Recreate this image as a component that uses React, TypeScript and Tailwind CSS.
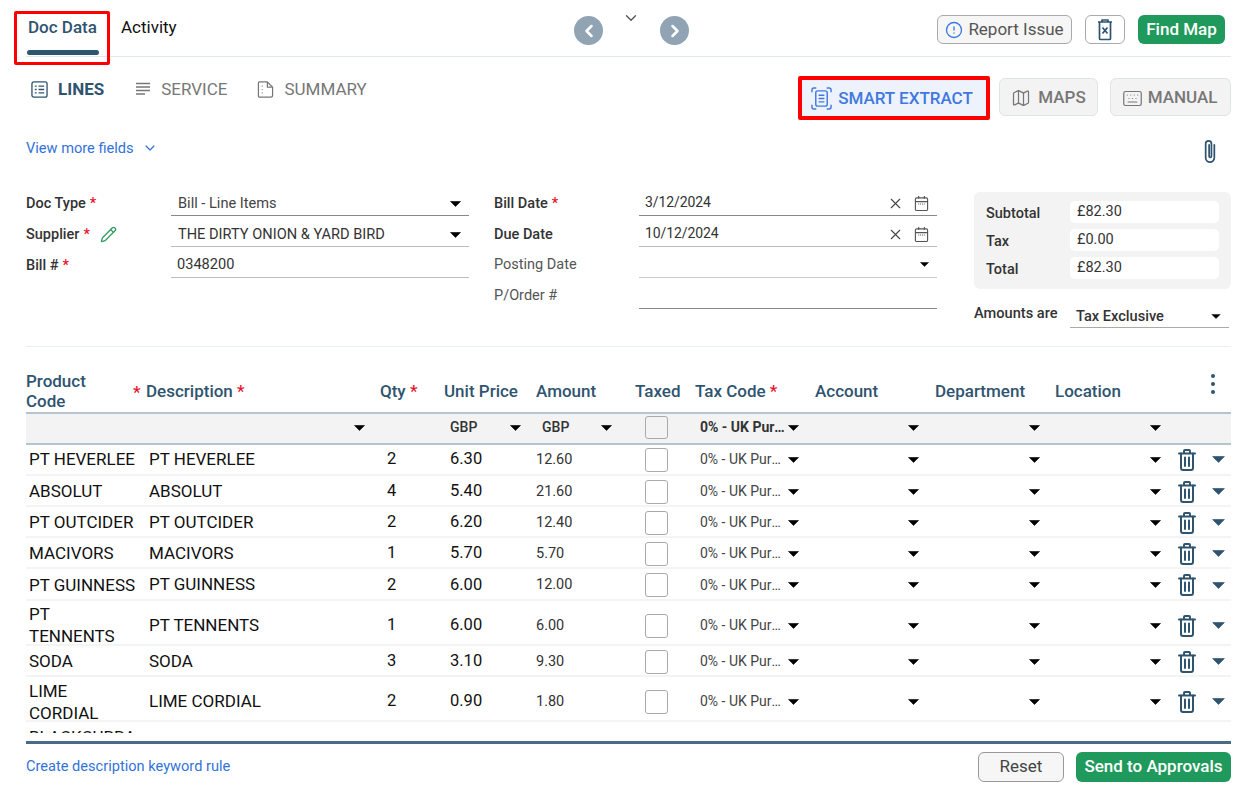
import React from "react";
import { Map, Keyboard, Pencil, X, ChevronDown, ChevronLeft, ChevronRight, CircleAlert } from "lucide-react";

const COLS = "grid grid-cols-[120px_234px_64px_92px_99px_60px_120px_120px_120px_120px_56px]";

const Caret = ({ className = "w-[11px] h-[6px] text-black" }: { className?: string }) => (
  <svg viewBox="0 0 11 6" className={className + " shrink-0"}>
    <path d="M0.5 0.5h10L5.5 5.5z" fill="currentColor" stroke="currentColor" strokeWidth="0.6" strokeLinejoin="round" />
  </svg>
);

const Star = ({ className = "" }: { className?: string }) => <span className={"text-[#e8112d] " + className}>*</span>;

const Trash = () => (
  <svg viewBox="0 0 18 22" className="w-[18px] h-[22px] text-[#2f5470]" fill="none" stroke="currentColor" strokeWidth="2" strokeLinecap="round" strokeLinejoin="round">
    <path d="M1 4.5h16M6 4.5V2a1 1 0 0 1 1-1h4a1 1 0 0 1 1 1v2.5" />
    <path d="M3 4.5V19a2 2 0 0 0 2 2h8a2 2 0 0 0 2-2V4.5" />
    <path d="M7 8.5v8.5M11 8.5v8.5" />
  </svg>
);

const Calendar = () => (
  <svg viewBox="0 0 16 18" className="w-[15px] h-[17px] text-[#555]" fill="none" stroke="currentColor" strokeWidth="1.2">
    <rect x="1.5" y="3" width="13" height="13.5" rx="1.5" />
    <path d="M1.5 7h13M5 1v3M11 1v3" />
    <path d="M4.5 9.5h7" strokeDasharray="1 1" />
  </svg>
);

const LinesIcon = () => (
  <svg viewBox="0 0 18 18" className="w-[17px] h-[17px]" fill="none" stroke="#2f5470" strokeWidth="1.4">
    <rect x="1" y="1" width="16" height="16" rx="2" />
    <path d="M4 5.5h2M8 5.5h6M4 9h2M8 9h6M4 12.5h2M8 12.5h6" />
  </svg>
);

const ServiceIcon = () => (
  <svg viewBox="0 0 16 16" className="w-[16px] h-[16px]" fill="none" stroke="#777" strokeWidth="1.3">
    <path d="M1 2.5h14M1 6h14M1 9.5h14M1 13h9" />
  </svg>
);

const SummaryIcon = () => (
  <svg viewBox="0 0 18 18" className="w-[17px] h-[17px]" fill="none" stroke="#777" strokeWidth="1.3" strokeLinejoin="round">
    <path d="M2.5 1h8.5l5.5 5.5V15a2 2 0 0 1-2 2h-12a1 1 0 0 1-1-1V2.5A1.5 1.5 0 0 1 2.5 1z" />
    <path d="M11 1v5.5h5.5M5 5.5h1M5 9h1M5 12.5h1" />
  </svg>
);

const ScanIcon = () => (
  <svg viewBox="0 0 22 24" className="w-[21px] h-[23px]" fill="none" stroke="#3f79e0" strokeWidth="1.5" strokeLinecap="round">
    <path d="M1 5V3a2 2 0 0 1 2-2h2M17 1h2a2 2 0 0 1 2 2v2M1 19v2a2 2 0 0 0 2 2h2M17 23h2a2 2 0 0 0 2-2v-2" />
    <rect x="5" y="4" width="12" height="16" rx="2" />
    <path d="M8.5 8.5h5M8.5 12h5M8.5 15.5h5" />
  </svg>
);

const ClipboardX = () => (
  <svg viewBox="0 0 16 22" className="w-[16px] h-[23px]" fill="none" stroke="#2f5470" strokeWidth="1.7" strokeLinejoin="round">
    <path d="M1 3.5h14M5 3.5V1.5h6v2" />
    <path d="M2.5 3.5V20a1 1 0 0 0 1 1h9a1 1 0 0 0 1-1V3.5" />
    <path d="M5.5 9l5 6M10.5 9l-5 6" />
  </svg>
);

const Clip = () => (
  <svg viewBox="0 0 16 26" className="w-[16px] h-[25px]" fill="none" stroke="#2f5470" strokeWidth="1.8" strokeLinecap="round">
    <path d="M12.5 6v13.5a4.5 4.5 0 0 1-9 0V5a3 3 0 0 1 6 0v13a1.2 1.2 0 0 1-2.4 0V6" />
  </svg>
);

type Row = { code: string[]; desc: string; qty: string; unit: string; amount: string; h: string; codeClass: string };

const rows: Row[] = [
  { code: ["PT HEVERLEE"], desc: "PT HEVERLEE", qty: "2", unit: "6.30", amount: "12.60", h: "h-[31px]", codeClass: "-mt-[1px]" },
  { code: ["ABSOLUT"], desc: "ABSOLUT", qty: "4", unit: "5.40", amount: "21.60", h: "h-[31px] pt-[2px]", codeClass: "-mt-[1px]" },
  { code: ["PT OUTCIDER"], desc: "PT OUTCIDER", qty: "2", unit: "6.20", amount: "12.40", h: "h-[31px] pt-[2px]", codeClass: "-mt-[1px]" },
  { code: ["MACIVORS"], desc: "MACIVORS", qty: "1", unit: "5.70", amount: "5.70", h: "h-[31px] pt-[2px]", codeClass: "-mt-[1px]" },
  { code: ["PT GUINNESS"], desc: "PT GUINNESS", qty: "2", unit: "6.00", amount: "12.00", h: "h-[32px] pt-[2px]", codeClass: "-mt-[1px]" },
  { code: ["PT", "TENNENTS"], desc: "PT TENNENTS", qty: "1", unit: "6.00", amount: "6.00", h: "h-[45px] pt-[3px]", codeClass: "-mt-[1px]" },
  { code: ["SODA"], desc: "SODA", qty: "3", unit: "3.10", amount: "9.30", h: "h-[31px] pt-[2px]", codeClass: "-mt-[1px]" },
  { code: ["LIME", "CORDIAL"], desc: "LIME CORDIAL", qty: "2", unit: "0.90", amount: "1.80", h: "h-[45px] pt-[2px]", codeClass: "mt-[1px]" },
  { code: ["BLACKCURRA"], desc: "BLACKCURRANT", qty: "1", unit: "1.00", amount: "1.00", h: "h-[45px] pt-[2px]", codeClass: "self-start pt-[2px]" },
];

const Label = ({ children, bold = true }: { children: React.ReactNode; bold?: boolean }) => (
  <div className={"w-[145px] shrink-0 text-[14.5px] leading-[20px] flex items-center gap-1 " + (bold ? "font-medium text-[#333] pt-[6px]" : "text-[#555] pt-[4px]")}>
    {children}
  </div>
);

const Field = ({ children, line = "border-[#888]" }: { children?: React.ReactNode; line?: string }) => (
  <div className={"flex-1 h-[31px] border-b flex items-center pt-[8px] pl-[7px] pr-[8px] text-[14.6px] text-[#333] " + line}>{children}</div>
);

const FormRow = ({ children }: { children: React.ReactNode }) => <div className="flex items-center h-[31px]">{children}</div>;

export default function App() {
  return (
    <div className="w-[1256px] h-[786px] overflow-hidden bg-white pl-[26px] pr-[25px] font-['Roboto',sans-serif] text-black">
      {/* Header */}
      <div className="h-[57px] border-b border-[#e3e9e9] flex items-start">
        <div className="w-[548px] flex items-start">
          <div className="relative w-[73px] h-[56px] pl-[2px] pt-[17px] text-[17px] leading-[20px] font-medium text-[#2f5470] whitespace-nowrap">
            Doc Data
            <div className="absolute left-[1px] top-[50px] w-[72px] h-[5px] rounded-full bg-[#2f5470]" />
            <div className="absolute -left-[12px] top-[11px] w-[96px] h-[54px] border-[3.5px] border-[#f00] rounded-[2px]" />
          </div>
          <div className="ml-[22px] pt-[17px] text-[17px] leading-[20px] text-[#111]">Activity</div>
        </div>
        <div className="flex items-start pt-[16px]">
          <div className="w-[29px] h-[29px] rounded-full bg-[#90a4b4] flex items-center justify-center">
            <ChevronLeft className="w-[20px] h-[20px] text-white" strokeWidth={3} />
          </div>
          <div className="w-[55px] flex justify-center -mt-[7px] mr-[2px]">
            <ChevronDown className="w-[24px] h-[18px] text-[#555]" strokeWidth={1.8} />
          </div>
          <div className="w-[29px] h-[29px] rounded-full bg-[#90a4b4] flex items-center justify-center">
            <ChevronRight className="w-[20px] h-[20px] text-white" strokeWidth={3} />
          </div>
        </div>
        <div className="flex-1 flex justify-end items-center gap-[13px] pt-[15px] pr-[6px]">
          <button className="w-[135px] h-[29px] rounded-[6px] border border-[#aaa] bg-[#f6f6f6] flex items-center justify-center gap-[5px] text-[17px] text-[#555]">
            <CircleAlert className="w-[18px] h-[18px] text-[#3f79e0]" strokeWidth={1.8} />
            Report Issue
          </button>
          <button className="w-[40px] h-[29px] rounded-[6px] border border-[#aaa] bg-white flex items-center justify-center">
            <ClipboardX />
          </button>
          <button className="w-[87px] h-[29px] rounded-[6px] bg-[#1f9a5c] text-white text-[17px] font-medium">Find Map</button>
        </div>
      </div>

      {/* Sub tabs */}
      <div className="h-[73px] flex items-start">
        <div className="flex-1 flex items-center pt-[22px] text-[17px] leading-[20px]">
          <div className="ml-[5px]"><LinesIcon /></div>
          <span className="ml-[10px] font-bold text-[#2f5470]">LINES</span>
          <div className="ml-[31px]"><ServiceIcon /></div>
          <span className="ml-[10px] text-[#777]">SERVICE</span>
          <div className="ml-[30px]"><SummaryIcon /></div>
          <span className="ml-[10px] text-[#777]">SUMMARY</span>
        </div>
        <div className="flex items-start gap-[9px] pt-[19px]">
          <div className="border-[4px] border-[#f00] rounded-[2px]">
            <button className="w-[184px] h-[36px] bg-[#eef2fd] flex items-center justify-center gap-[6px] pr-[4px] pt-[1px] text-[17px] font-medium text-[#3f79e0]">
              <ScanIcon />
              SMART EXTRACT
            </button>
          </div>
          <button className="w-[99px] h-[38px] mt-[2px] rounded-[6px] border border-[#dfe4e4] bg-[#f3f3f3] flex items-center justify-center gap-[7px] pt-[2px] text-[17px] font-medium text-[#777]">
            <Map className="w-[20px] h-[20px]" strokeWidth={1.5} />
            MAPS
          </button>
          <button className="w-[121px] h-[38px] mt-[2px] ml-[3px] rounded-[6px] border border-[#dfe4e4] bg-[#f3f3f3] flex items-center justify-center gap-[5px] pt-[2px] pr-[2px] text-[17px] font-medium text-[#777]">
            <Keyboard className="w-[21px] h-[21px]" strokeWidth={1.4} />
            MANUAL
          </button>
        </div>
      </div>

      {/* View more */}
      <div className="h-[55px] flex items-start justify-between">
        <div className="flex items-center gap-[8px] pt-[8px] text-[14.6px] leading-[20px] text-[#3373d9]">
          View more fields
          <ChevronDown className="w-[16px] h-[16px]" strokeWidth={1.8} />
        </div>
        <div className="pt-[9px] pr-[13px]"><Clip /></div>
      </div>

      {/* Form */}
      <div className="h-[162px] border-b border-[#e9eeee] flex items-start">
        <div className="w-[443px]">
          <FormRow>
            <Label>Doc Type <Star /></Label>
            <Field>
              <span className="flex-1 text-[#444]">Bill - Line Items</span>
              <Caret />
            </Field>
          </FormRow>
          <FormRow>
            <Label>
              Supplier <Star />
              <Pencil className="ml-[6px] w-[17px] h-[17px] text-[#2f9e62]" strokeWidth={1.8} />
            </Label>
            <Field line="border-[#bbb]">
              <span className="flex-1">THE DIRTY ONION &amp; YARD BIRD</span>
              <Caret />
            </Field>
          </FormRow>
          <FormRow>
            <Label>Bill # <Star /></Label>
            <Field line="border-[#bbb]">
              <span className="flex-1 -ml-[1px] -mt-[2px]">0348200</span>
            </Field>
          </FormRow>
        </div>
        <div className="w-[443px] ml-[25px]">
          <FormRow>
            <Label>Bill Date <Star /></Label>
            <Field>
              <span className="flex-1 -ml-[1px] -mt-[4px] text-[14px] tracking-[-0.1px]">3/12/2024</span>
              <X className="w-[17px] h-[17px] text-[#444] mr-[10px] -mt-[2px]" strokeWidth={1.5} />
              <div className="-mt-[2px]"><Calendar /></div>
            </Field>
          </FormRow>
          <FormRow>
            <Label>Due Date</Label>
            <Field line="border-[#bbb]">
              <span className="flex-1 -ml-[1px] -mt-[4px] text-[14px] tracking-[-0.1px]">10/12/2024</span>
              <X className="w-[17px] h-[17px] text-[#444] mr-[10px] -mt-[2px]" strokeWidth={1.5} />
              <div className="-mt-[2px]"><Calendar /></div>
            </Field>
          </FormRow>
          <FormRow>
            <Label bold={false}>Posting Date</Label>
            <Field line="border-[#ccc]">
              <span className="flex-1" />
              <Caret className="w-[9px] h-[5px] text-black -mt-[4px]" />
            </Field>
          </FormRow>
          <FormRow>
            <Label bold={false}>P/Order #</Label>
            <Field line="border-[#888]" />
          </FormRow>
        </div>
        <div className="w-[257px] ml-[37px] pt-[7px]">
          <div className="h-[97px] rounded-[6px] bg-[#f3f3f3] pl-[12px] pr-[12px] pt-[9px] flex flex-col gap-[6px] text-[14.5px]">
            {[["Subtotal", "£82.30"], ["Tax", "£0.00"], ["Total", "£82.30"]].map(([k, v]) => (
              <div key={k} className="flex items-start h-[22px]">
                <span className="w-[84px] pt-[2px] font-medium text-[#333]">{k}</span>
                <span className="flex-1 h-[22px] rounded-[5px] bg-white pl-[7px] pt-[1px] leading-[20px] text-[#333]">{v}</span>
              </div>
            ))}
          </div>
          <div className="flex items-start mt-[14px]">
            <span className="w-[96px] text-[14.6px] leading-[20px] font-medium text-[#333]">Amounts are</span>
            <div className="w-[159px] h-[24px] border-b border-[#aaa] flex items-center pl-[6px] pr-[8px] mt-[1px] pt-[2px] text-[14.6px] font-medium text-[#333]">
              <span className="flex-1">Tax Exclusive</span>
              <Caret className="w-[10px] h-[5px] text-black" />
            </div>
          </div>
        </div>
      </div>

      {/* Table header */}
      <div className={COLS + " mt-[25px] h-[40px] items-center text-[17px] font-medium text-[#2f5470]"}>
        <div className="flex items-center leading-[20px]">
          <span className="w-[107px] -mt-[2px]">Product<br />Code</span>
          <Star />
        </div>
        <div>Description <Star /></div>
        <div>Qty <Star /></div>
        <div>Unit Price</div>
        <div>Amount</div>
        <div>Taxed</div>
        <div>Tax Code <Star /></div>
        <div>Account</div>
        <div>Department</div>
        <div>Location</div>
        <div className="flex justify-end pr-[16px] pb-[17px]">
          <div className="flex flex-col gap-[4px]">
            <span className="w-[4px] h-[4px] rounded-full bg-[#2f5470]" />
            <span className="w-[4px] h-[4px] rounded-full bg-[#2f5470]" />
            <span className="w-[4px] h-[4px] rounded-full bg-[#2f5470]" />
          </div>
        </div>
      </div>

      {/* Filter row */}
      <div className={COLS + " h-[33px] pb-[2px] items-center border-y-2 border-[#b5c5d0] bg-[#f3f3f3] text-[14px] font-medium text-[#333]"}>
        <div />
        <div className="flex justify-end pr-[15px]"><Caret /></div>
        <div />
        <div className="flex items-center justify-between pl-[6px] pr-[15px]">GBP<Caret /></div>
        <div className="flex items-center justify-between pl-[6px] pr-[23px]">GBP<Caret /></div>
        <div className="pl-[10px]"><div className="w-[23px] h-[23px] rounded-[3px] border border-[#aaa]" /></div>
        <div className="flex items-center gap-[2px] pl-[5px] pr-[16px]"><span className="truncate flex-1 font-bold">0% - UK Purchases</span><Caret /></div>
        <div className="flex justify-end pr-[16px]"><Caret /></div>
        <div className="flex justify-end pr-[15px]"><Caret /></div>
        <div className="flex justify-end pr-[14px]"><Caret /></div>
        <div />
      </div>

      {/* Rows */}
      <div className="h-[288px] overflow-hidden">
        {rows.map((r) => (
          <div key={r.desc} className={COLS + " items-center border-b-2 border-[#f3f4f4] " + r.h}>
            <div className={"pl-[3px] text-[17px] leading-[22px] text-[#111] " + r.codeClass}>
              {r.code.map((c) => <div key={c}>{c}</div>)}
            </div>
            <div className="pl-[3px] text-[17px] text-[#111]">{r.desc}</div>
            <div className="pl-[7px] text-[16.5px] text-[#111]">{r.qty}</div>
            <div className="pl-[6px] text-[16.5px] text-[#111]">{r.unit}</div>
            <div className="text-[14.5px] text-[#333]">{r.amount}</div>
            <div className="pl-[10px]"><div className="w-[23px] h-[24px] rounded-[3px] border border-[#aaa] bg-white" /></div>
            <div className="flex items-center gap-[2px] pl-[5px] pr-[16px] text-[14px] text-[#444]"><span className="truncate flex-1">0% - UK Purchases</span><Caret /></div>
            <div className="flex justify-end pr-[16px]"><Caret /></div>
            <div className="flex justify-end pr-[15px]"><Caret /></div>
            <div className="flex justify-end pr-[14px]"><Caret /></div>
            <div className="flex items-center justify-between pl-[3px] pr-[6px]">
              <Trash />
              <Caret className="w-[13px] h-[7px] text-[#2f5470]" />
            </div>
          </div>
        ))}
      </div>

      {/* Footer */}
      <div className="mt-[8px] h-[3px] bg-[#4a6b85]" />
      <div className="flex items-center justify-between mt-[8px]">
        <span className="text-[14.6px] text-[#3373d9]">Create description keyword rule</span>
        <div className="flex gap-[12px]">
          <button className="w-[86px] h-[30px] rounded-[6px] border border-[#999] bg-[#f6f6f6] text-[17px] text-[#444]">Reset</button>
          <button className="w-[155px] h-[30px] rounded-[6px] bg-[#1f9a5c] text-white text-[17px] font-medium">Send to Approvals</button>
        </div>
      </div>
    </div>
  );
}
